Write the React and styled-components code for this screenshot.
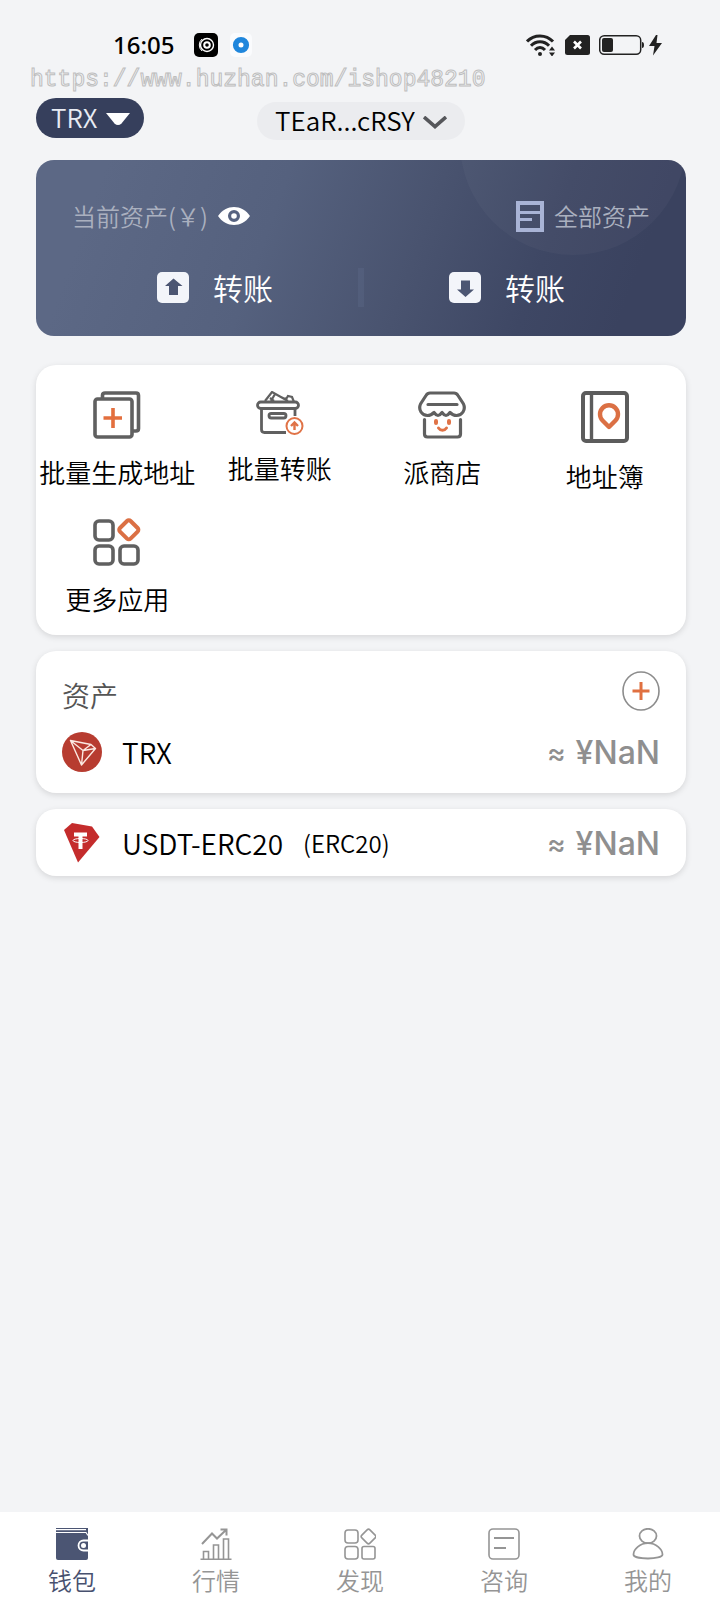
import React from "react";
import styled, { createGlobalStyle, css } from "styled-components";

const GlobalStyle = createGlobalStyle`
  * {
    box-sizing: border-box;
  }
  body {
    margin: 0;
    background: #f3f4f6;
    color: #000;
    font-family: "Noto Sans CJK SC", sans-serif;
    font-weight: 350;
  }
  button, select {
    margin: 0;
    padding: 0;
    border: none;
    background: none;
    color: inherit;
    font: inherit;
  }
  svg {
    display: block;
    flex: none;
  }
`;

const Page = styled.div`
  min-height: 100vh;
  display: flex;
  flex-direction: column;
`;

const StatusBar = styled.header`
  display: flex;
  align-items: center;
  justify-content: space-between;
  height: 64px;
  padding: 26px 57px 0 113px;
`;

const StatusGroup = styled.div`
  display: flex;
  align-items: center;
  gap: ${(props) => props.gap};
`;

const Clock = styled.time`
  font-family: "Noto Sans", sans-serif;
  font-size: 24px;
  line-height: 26px;
  font-weight: 500;
  margin-right: 8px;
`;

const Watermark = styled.div`
  padding: 2px 0 0 30px;
  font-family: "Liberation Mono", monospace;
  font-weight: 400;
  font-size: 23px;
  line-height: 28px;
  white-space: nowrap;
  color: #f3f4f6;
  -webkit-text-stroke: 1px #bebebe;
`;

const Content = styled.main`
  flex: 1;
  display: flex;
  flex-direction: column;
  padding: 4px 34px 16px 36px;
`;

const Toolbar = styled.div`
  display: grid;
  grid-template-columns: 1fr auto 1fr;
  align-items: end;
  justify-items: start;
  height: 42px;
  margin-bottom: 20px;
`;

const Picker = styled.div`
  position: relative;
  align-self: ${(props) => (props.$dark ? "start" : "end")};
  svg {
    position: absolute;
    right: ${(props) => (props.$dark ? "14px" : "18px")};
    top: 50%;
    margin-top: -5px;
    pointer-events: none;
  }
  select {
    display: block;
    appearance: none;
    height: 38px;
    border-radius: 20px;
    background: #ebecef;
    font-size: 26px;
    line-height: 36px;
    padding: 0 50px 2px 18px;
    ${(props) =>
      props.$dark &&
      css`
        height: 40px;
        padding: 0 46px 2px 15px;
        background: #363f5c;
        color: #e8ebf3;
      `}
  }
`;

const BalanceCard = styled.section`
  position: relative;
  overflow: hidden;
  height: 176px;
  border-radius: 18px;
  padding: 38px 36px 29px;
  display: flex;
  flex-direction: column;
  justify-content: space-between;
  background: linear-gradient(110deg, #5c6885 10%, #55617e 36%, #49536f 58%, #3e4764 76%, #3a425f 90%);
  &::before {
    content: "";
    position: absolute;
    right: 0;
    top: -131px;
    width: 226px;
    height: 226px;
    border-radius: 50%;
    background: rgba(255, 255, 255, 0.03);
  }
`;

const BalanceHead = styled.div`
  position: relative;
  display: flex;
  justify-content: space-between;
  align-items: center;
`;

const HeadButton = styled.button`
  display: flex;
  align-items: center;
  gap: 10px;
  font-size: 24px;
  line-height: 36px;
  color: #aab0bf;
`;

const Transfers = styled.div`
  display: flex;
  align-items: center;
  justify-content: space-between;
`;

const TransferButton = styled.button`
  flex: 1;
  display: flex;
  align-items: center;
  justify-content: center;
  gap: 24px;
  color: #fff;
  font-size: 30px;
  line-height: 40px;
`;

const Divider = styled.span`
  width: 6px;
  height: 39px;
  background: rgba(120, 132, 165, 0.16);
`;

const Card = styled.section`
  background: #fff;
  border-radius: 20px;
  box-shadow: 0 2px 6px rgba(0, 0, 0, 0.12);
  margin-top: ${(props) => props.top || "16px"};
  padding: ${(props) => props.pad || "0 26px"};
`;

const MenuGrid = styled.nav`
  display: grid;
  grid-template-columns: repeat(4, 1fr);
  row-gap: 23px;
`;

const MenuItem = styled.button`
  display: flex;
  flex-direction: column;
  align-items: center;
  gap: 14px;
  font-size: 26px;
  line-height: 38px;
  white-space: nowrap;
`;

const AssetsHead = styled.div`
  display: flex;
  justify-content: space-between;
  align-items: center;
  padding-bottom: 3px;
  h2 {
    margin: 0;
    padding-top: 8px;
    font-size: 28px;
    line-height: 40px;
    font-weight: 350;
    color: #555;
  }
`;

const AddButton = styled.button`
  width: 38px;
  height: 40px;
`;

const AssetRow = styled.div`
  display: flex;
  align-items: center;
  height: 67px;
`;

const Coin = styled.span`
  display: flex;
  justify-content: center;
  width: 40px;
  margin-right: 20px;
`;

const CoinName = styled.span`
  font-size: 28px;
  line-height: 40px;
`;

const Network = styled.span`
  margin-left: 20px;
  font-size: 24px;
  line-height: 40px;
`;

const Value = styled.span`
  margin-left: auto;
  padding-top: 2px;
  display: flex;
  align-items: center;
  gap: 10px;
  font-family: Inter, sans-serif;
  font-weight: 500;
  font-size: 32px;
  line-height: 40px;
  color: #8f8f8f;
  small {
    font-size: 28px;
    line-height: 36px;
  }
`;

const TabBar = styled.nav`
  display: flex;
  height: 100px;
  background: #fff;
`;

const Tab = styled.a`
  flex: 1;
  display: flex;
  flex-direction: column;
  align-items: center;
  gap: 2px;
  padding-top: 16px;
  font-size: 24px;
  line-height: 36px;
  text-decoration: none;
  color: ${(props) => (props.$active ? "#48516f" : "#959595")};
`;

const StatusIcons = () => (
  <>
    <svg width="30" height="22" viewBox="0 0 30 22" fill="none" stroke="#222" strokeWidth="3">
      <path d="M1 7.500C8 0 20 0 27 7.500M5 11.800C10 6.500 18 6.500 23 11.800M9 16C12 12.800 16 12.800 19 16" />
      <circle cx="14" cy="20" r="2" fill="#222" stroke="none" />
      <path d="M23 16.500l3-4 3 4zM23 18.500l3 4 3-4z" fill="#222" stroke="none" />
    </svg>
    <svg width="25" height="20" viewBox="0 0 25 20">
      <path d="M5 0h17.500A2.500 2.500 0 0 1 25 2.500v15A2.500 2.500 0 0 1 22.500 20h-20A2.500 2.500 0 0 1 0 17.500V5z" fill="#222" />
      <path d="M9 6.500l7 7M16 6.500l-7 7" stroke="#fff" strokeWidth="2.600" />
    </svg>
    <svg width="64" height="22" viewBox="0 0 64 22">
      <rect x="0.700" y="1.700" width="41" height="18.600" rx="4.500" fill="none" stroke="#222" strokeWidth="1.500" />
      <rect x="3" y="4" width="11" height="14" rx="2" fill="#222" />
      <path d="M43 8q2 0 2 3t-2 3z" fill="#222" />
      <path d="M57 1l-7 11h5.500L54 21.500 63 9h-5.500L58.500 1z" fill="#222" />
    </svg>
  </>
);

const EyeIcon = () => (
  <svg width="32" height="20" viewBox="0 0 32 20">
    <path d="M0 10C8-2 24-2 32 10 24 22 8 22 0 10z" fill="#fff" />
    <circle cx="16" cy="10" r="4.400" fill="#fff" stroke="#566280" strokeWidth="3.200" />
  </svg>
);

const ListIcon = () => (
  <svg width="28" height="31" viewBox="0 0 28 31" fill="none" stroke="#a9b4d6">
    <path d="M2 2h24v27H2z" strokeWidth="4" />
    <path d="M4 11.500h20M4 18.500h12" strokeWidth="3" />
  </svg>
);

const ArrowIcon = ({ down }) => (
  <svg width="32" height="31" viewBox="0 0 32 31">
    <rect width="32" height="31" rx="5" fill="#f3f5fa" />
    <path
      d={down ? "M12 8.500h9v9h4L16.500 25 8 17.500h4z" : "M12 23h9v-9h4.500L16.500 6.500 8 14h4z"}
      fill="#4c5673"
    />
  </svg>
);

const BatchIcon = () => (
  <svg width="48" height="48" viewBox="0 0 48 48" fill="none" stroke="#606060" strokeWidth="3.600">
    <path d="M9.500 7V4.500q0-2.500 2.500-2.500h31q2.500 0 2.500 2.500v33q0 2.500-2.500 2.500h-3" />
    <rect x="2" y="8" width="37" height="38" rx="2.500" />
    <path d="M20 17v20M10.500 27h18.500" stroke="#e36f3e" strokeWidth="3.600" />
  </svg>
);

const BoxIcon = () => (
  <svg width="48" height="44" viewBox="0 0 48 44" fill="none" stroke="#606060" strokeWidth="2.800">
    <path d="M9 10l7-9 16 9M14 7l4 3M19 3l-4 7M26 6.500q4 3 6-1.500l4 1 2 5" strokeWidth="2.200" />
    <rect x="1.500" y="11" width="41" height="6.500" rx="3.200" />
    <path d="M5.500 18v20.500q0 3 3 3H30M39 18v7" />
    <rect x="13" y="22.500" width="17" height="4.500" rx="2.200" />
    <circle cx="38.500" cy="35" r="8" stroke="#e07347" strokeWidth="2" />
    <path d="M38.500 39v-7M35 35l3.500-3.500L42 35" stroke="#e07347" strokeWidth="2.400" />
  </svg>
);

const ShopIcon = () => (
  <svg width="48" height="48" viewBox="0 0 48 48" fill="none" stroke="#606060" strokeWidth="3.200" strokeLinecap="round">
    <path d="M12 2h24q2.500 0 4 2.500L45.500 13c2.500 6-1.500 11.500-7 11.500-3 0-4.500-1-6.500-3-3 4-5 4-8 0-3 4-5 4-8 0-2 2-3.500 3-6.500 3C4 24.500 0 19 2.500 13L8 4.500Q9.500 2 12 2z" strokeLinejoin="round" />
    <path d="M10 13.500h29M6.500 28.500V43q0 3 3 3h30q3 0 3-3V28.500" />
    <path d="M18 30v2M31 30v2" stroke="#e07347" strokeWidth="4" />
    <path d="M20.500 37c2 3 6 3 8 0" stroke="#e07347" strokeWidth="3" />
  </svg>
);

const BookIcon = () => (
  <svg width="48" height="52" viewBox="0 0 48 52" fill="none" stroke="#5c5c5c" strokeWidth="4">
    <rect x="2" y="2" width="44" height="48" rx="3" />
    <path d="M10.500 2v48" strokeWidth="3.400" />
    <path d="M28 36l-6.500-6.500a9 9 0 1 1 13 0z" stroke="#db7044" strokeWidth="4.400" strokeLinejoin="round" />
  </svg>
);

const AppsIcon = () => (
  <svg width="48" height="48" viewBox="0 0 48 48" fill="none" stroke="#606060" strokeWidth="3.600">
    <rect x="2" y="3" width="18" height="19" rx="4" />
    <rect x="2" y="28" width="18" height="18" rx="4" />
    <rect x="27" y="28" width="18" height="18" rx="4" />
    <rect x="28.300" y="4.300" width="15" height="15" rx="2.500" transform="rotate(45 35.800 11.800)" stroke="#db7044" strokeWidth="4" />
  </svg>
);

const TronLogo = () => (
  <svg width="40" height="40" viewBox="0 0 40 40" fill="none" stroke="#fbe9e2" strokeWidth="1.400" strokeLinejoin="round">
    <circle cx="20" cy="20" r="20" fill="#b73c30" stroke="none" />
    <path d="M8.500 8.500l20.500 4 4.500 4L19.500 33zM8.500 8.500L21 18.500 19.500 33M21 18.500l8-6M21 18.500l12.500-2" />
  </svg>
);

const TetherLogo = () => (
  <svg width="36" height="40" viewBox="0 0 36 40">
    <path d="M8 0l20 3.500L35.500 14 14 39.500 0 7z" fill="#c42c2c" />
    <path d="M10 9.500h13v4h-4.500V26h-4V13.500H10z" fill="#fff" />
    <ellipse cx="16.500" cy="17.500" rx="7.500" ry="2" fill="none" stroke="#fff" />
  </svg>
);

const WalletIcon = () => (
  <svg width="32" height="32" viewBox="0 0 32 32">
    <path d="M0 0h32v30q0 2-2 2H2q-2 0-2-2z" fill="#4b5573" />
    <path d="M0 1.700h30M0 4.500h30l2 3" fill="none" stroke="#fff" strokeWidth="1.200" />
    <path d="M32 12.500h-4.500a5 5 0 0 0 0 10H32" fill="none" stroke="#fff" strokeWidth="1.800" />
    <circle cx="27.500" cy="17.500" r="2.500" fill="#fff" />
  </svg>
);

const ChartIcon = () => (
  <svg width="32" height="32" viewBox="0 0 32 32" fill="none" stroke="#959595" strokeWidth="1.600">
    <path d="M.500 31.200h31M3.500 31v-7.500h5V31M13.500 31V17h5v14M23.500 31V11h5v20" />
    <path d="M2 16L12 5.500l5 5L26.500 1.500M20.500 1.500h6v6" strokeWidth="2" />
  </svg>
);

const DiscoverIcon = () => (
  <svg width="32" height="32" viewBox="0 0 32 32" fill="none" stroke="#959595" strokeWidth="1.600">
    <rect x="1" y="2" width="13" height="13" rx="3" />
    <rect x="1" y="18.500" width="13" height="12.500" rx="3" />
    <rect x="18" y="18.500" width="13" height="12.500" rx="2" />
    <rect x="18.800" y="2.800" width="11.400" height="11.400" rx="2" transform="rotate(45 24.500 8.500)" />
  </svg>
);

const NewsIcon = () => (
  <svg width="32" height="32" viewBox="0 0 32 32" fill="none" stroke="#959595" strokeWidth="1.600">
    <rect x="1" y="1" width="30" height="30" rx="4" />
    <path d="M6 10h20M6 20h12" strokeWidth="2" />
  </svg>
);

const UserIcon = () => (
  <svg width="32" height="32" viewBox="0 0 32 32" fill="none" stroke="#959595" strokeWidth="1.800">
    <ellipse cx="16" cy="8" rx="8.500" ry="7.200" />
    <path d="M16 15.200c-8 0-14.500 6-14.500 11.300 0 5.300 29 5.300 29 0 0-5.300-6.500-11.300-14.500-11.300z" />
  </svg>
);

const menu = [
  { label: "批量生成地址", Icon: BatchIcon },
  { label: "批量转账", Icon: BoxIcon },
  { label: "派商店", Icon: ShopIcon },
  { label: "地址簿", Icon: BookIcon },
  { label: "更多应用", Icon: AppsIcon },
];

const tabs = [
  { label: "钱包", Icon: WalletIcon, active: true },
  { label: "行情", Icon: ChartIcon },
  { label: "发现", Icon: DiscoverIcon },
  { label: "咨询", Icon: NewsIcon },
  { label: "我的", Icon: UserIcon },
];

const Asset = ({ Logo, name, network }) => (
  <AssetRow>
    <Coin>
      <Logo />
    </Coin>
    <CoinName>{name}</CoinName>
    {network && <Network>({network})</Network>}
    <Value>
      <small>≈</small>
      <span>¥NaN</span>
    </Value>
  </AssetRow>
);

const App = () => {
  return (
    <Page>
      <GlobalStyle />
      <StatusBar>
        <StatusGroup gap="12px">
          <Clock>16:05</Clock>
          <svg width="24" height="24" viewBox="0 0 24 24" fill="none" stroke="#fff">
            <rect width="24" height="24" rx="5" fill="#000" stroke="none" />
            <circle cx="13" cy="12" r="6.500" strokeWidth="1.400" />
            <circle cx="13" cy="12" r="2.800" strokeWidth="2" />
            <path d="M8 6a8 8 0 0 0 0 12" />
          </svg>
          <svg width="22" height="24" viewBox="0 0 22 24">
            <rect width="22" height="24" rx="5" fill="#fafbfd" />
            <circle cx="11" cy="12" r="5.300" fill="#fff" stroke="#1f86dc" strokeWidth="5.600" />
          </svg>
        </StatusGroup>
        <StatusGroup gap="9px">
          <StatusIcons />
        </StatusGroup>
      </StatusBar>
      <Watermark>https://www.huzhan.com/ishop48210</Watermark>
      <Content>
        <Toolbar>
          <Picker $dark>
            <select aria-label="TRX">
              <option>TRX</option>
            </select>
            <svg width="24" height="12" viewBox="0 0 24 12">
              <path d="M0 0h24l-8.500 10.500q-3.500 3-7 0z" fill="#fff" />
            </svg>
          </Picker>
          <Picker>
            <select aria-label="TEaR...cRSY">
              <option>TEaR...cRSY</option>
            </select>
            <svg width="24" height="13" viewBox="0 0 24 13" fill="none" stroke="#55565a" strokeWidth="3.600">
              <path d="M1 1l11 9.500L23 1" />
            </svg>
          </Picker>
        </Toolbar>

        <BalanceCard>
          <BalanceHead>
            <HeadButton>
              当前资产(￥)
              <EyeIcon />
            </HeadButton>
            <HeadButton>
              <ListIcon />
              全部资产
            </HeadButton>
          </BalanceHead>
          <Transfers>
            <TransferButton>
              <ArrowIcon />
              转账
            </TransferButton>
            <Divider />
            <TransferButton>
              <ArrowIcon down />
              转账
            </TransferButton>
          </Transfers>
        </BalanceCard>

        <Card top="29px" pad="26px 0 17px">
          <MenuGrid>
            {menu.map(({ label, Icon }) => (
              <MenuItem key={label}>
                <Icon />
                {label}
              </MenuItem>
            ))}
          </MenuGrid>
        </Card>

        <Card pad="16px 26px 8px">
          <AssetsHead>
            <h2>资产</h2>
            <AddButton aria-label="+">
              <svg width="38" height="40" viewBox="0 0 38 40" fill="none">
                <ellipse cx="19" cy="20" rx="18" ry="19" stroke="#8c8c8c" strokeWidth="1.600" />
                <path d="M19 11v18M10.500 20h17" stroke="#e07040" strokeWidth="3" />
              </svg>
            </AddButton>
          </AssetsHead>
          <Asset Logo={TronLogo} name="TRX" />
        </Card>

        <Card>
          <Asset Logo={TetherLogo} name="USDT-ERC20" network="ERC20" />
        </Card>
      </Content>

      <TabBar>
        {tabs.map(({ label, Icon, active }) => (
          <Tab key={label} href="#" $active={active}>
            <Icon />
            {label}
          </Tab>
        ))}
      </TabBar>
    </Page>
  );
};

export default App;
